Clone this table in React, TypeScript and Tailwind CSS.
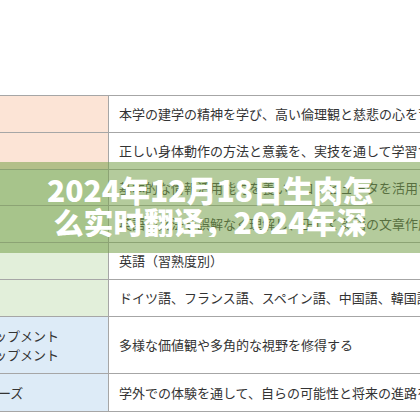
const rows = [
  { bg: "bg-[#fce4d6]", h: "h-[37px]", left: [], right: "本学の建学の精神を学び、高い倫理観と慈悲の心を育む" },
  { bg: "bg-[#fce4d6]", h: "h-[37px]", left: [], right: "正しい身体動作の方法と意義を、実技を通して学習する" },
  { bg: "bg-[#e2efda]", h: "h-[36px]", left: [], right: "基本的な情報活用能力を養い、コンピュータを活用する" },
  { bg: "bg-[#e2efda]", h: "h-[37px]", left: [], right: "英語の文法を誤解なく理解し、正しく英語の文章作成を" },
  { bg: "bg-[#e2efda]", h: "h-[37px]", left: [], right: "英語（習熟度別）" },
  { bg: "bg-[#e2efda]", h: "h-[37px]", left: [], right: "ドイツ語、フランス語、スペイン語、中国語、韓国語" },
  {
    bg: "bg-[#ddebf7]",
    h: "h-[57px]",
    left: ["ロップメント", "ロップメント"],
    right: "多様な価値観や多角的な視野を修得する",
  },
  { bg: "bg-[#ddebf7]", h: "h-[38px]", left: ["ニーズ"], right: "学外での体験を通して、自らの可能性と将来の進路を" },
];

const App = () => {
  return (
    <div className="relative w-[420px] h-[420px] overflow-hidden bg-white">
      <div className="pt-[95px]">
        <div className="border-t border-[#a6a6a6]">
          {rows.map((row, i) => (
            <div key={i} className={`flex ${row.h} border-b border-[#a6a6a6]`}>
              <div
                className={`w-[109px] shrink-0 ${row.bg} border-r border-[#a6a6a6] overflow-hidden flex flex-col justify-center text-[13px] leading-[19px] text-[#333] font-['Noto_Sans_CJK_JP',sans-serif]`}
              >
                {row.left.map((t, j) => (
                  <div key={j} className={`whitespace-nowrap ${t === "ニーズ" ? "-ml-[15px]" : "-ml-[19px]"}`}>
                    {t}
                  </div>
                ))}
              </div>
              <div className="flex-1 flex items-center pl-[10px] overflow-hidden whitespace-nowrap text-[13px] text-[#333] font-['Noto_Sans_CJK_JP',sans-serif]">
                {row.right}
              </div>
            </div>
          ))}
        </div>
      </div>

      <div className="absolute left-0 right-0 top-[162px] h-[91px] bg-[rgba(119,160,75,0.55)] flex items-center justify-center px-[44px] pb-[6px]">
        <p className="text-center text-white font-black text-[30px] leading-[32px] max-h-[64px] overflow-hidden font-['Noto_Sans_CJK_SC',sans-serif]">
          2024年12月18日生肉怎么实时翻译，2024年深度解析与实用技巧分享
        </p>
      </div>
    </div>
  );
};

export default App;
